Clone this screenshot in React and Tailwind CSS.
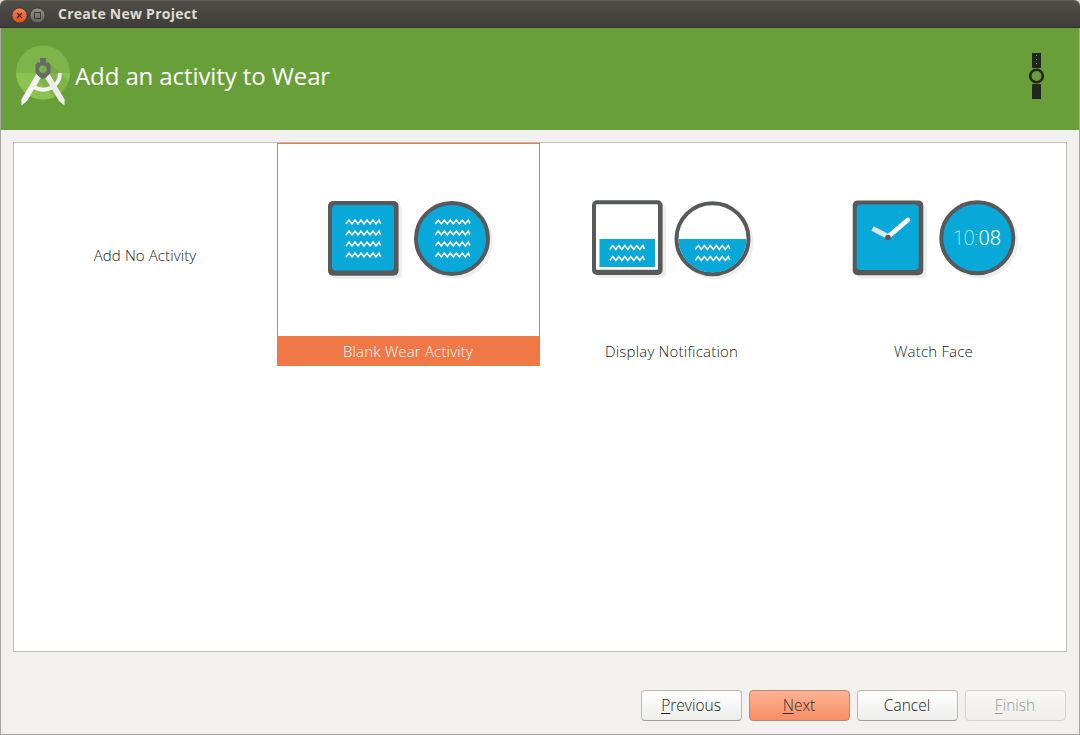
const TEXT = "font-['Open_Sans','Noto_Sans',sans-serif] whitespace-nowrap";
const LABEL = "font-light text-[15px] tracking-[0.1px]";

const waves = (x, y) => {
  let d = `M${x} ${y + 4}`;
  for (let i = 1; i <= 11; i++) d += `L${x + i * 3} ${y + (i % 2 ? 0 : 4)}`;
  return d + `l1.6 3.6`;
};

function Waves({ x, y, rows }) {
  return Array.from({ length: rows }, (_, i) => (
    <path key={i} d={waves(x, y + i * 11)} fill="none" stroke="#fff" strokeWidth="1.5" />
  ));
}

function SquareWatch({ x, y, fill, r = 4, children }) {
  return (
    <g>
      <rect x={x + 4} y={y + 4} width="70" height="74" rx="5" fill="#eeeeee" />
      <rect x={x} y={y} width="70.6" height="74.8" rx="5" fill="#58595b" />
      <rect x={x + 4} y={y + 4} width="62" height="65.500" rx={r} fill={fill} />
      {children}
    </g>
  );
}

function RoundWatch({ cx, cy, fill, children }) {
  return (
    <g>
      <ellipse cx={cx + 3} cy={cy + 3} rx="38" ry="37.5" fill="#eeeeee" />
      <ellipse cx={cx} cy={cy} rx="36" ry="35.5" fill={fill} stroke="#58595b" strokeWidth="4" />
      {children}
    </g>
  );
}

/* Art is drawn on a 263x193 canvas, the area above each tile label. */
function BlankArt() {
  return (
    <svg width="261" height="192" viewBox="1 1 261 192">
      <SquareWatch x={51} y={58} fill="#08a9d9"><Waves x={69} y={77} rows={4} /></SquareWatch>
      <RoundWatch cx={175} cy={95.5} fill="#08a9d9"><Waves x={158.3} y={77} rows={4} /></RoundWatch>
    </svg>
  );
}

function NotificationArt() {
  return (
    <svg width="263" height="193" viewBox="0 0 263 193">
      <SquareWatch x={52} y={57.2} fill="#fff" r={1}>
        <rect x="59.500" y="96" width="55.500" height="28" fill="#08a9d9" />
        <Waves x={69.8} y={102.500} rows={2} />
      </SquareWatch>
      <RoundWatch cx={172.5} cy={95.8} fill="#fff">
        <path d="M138.500 96H206.500A34 33.500 0 0 1 138.500 96Z" fill="#08a9d9" />
        <Waves x={155.3} y={102.500} rows={2} />
      </RoundWatch>
    </svg>
  );
}

function WatchFaceArt() {
  return (
    <svg width="263" height="193" viewBox="0 0 263 193">
      <SquareWatch x={49.7} y={57.4} fill="#08a9d9">
        <path d="M69.500 85.500L84 93" stroke="#e3e4e5" strokeWidth="4.800" />
        <path d="M86 93L104.800 77" stroke="#fff" strokeWidth="4.800" strokeLinecap="round" />
        <circle cx="85" cy="94.500" r="2.800" fill="#58595b" />
      </SquareWatch>
      <RoundWatch cx={174.3} cy={94.8} fill="#08a9d9">
        <text x="150" y="102" fontSize="21" fill="#fff" className="font-[Roboto,sans-serif] font-thin" textLength="25" lengthAdjust="spacingAndGlyphs">10:</text>
        <text x="175.500" y="102" fontSize="21" fill="#fff" className="font-[Roboto,sans-serif] font-light" textLength="22.500" lengthAdjust="spacingAndGlyphs">08</text>
      </RoundWatch>
    </svg>
  );
}

function StudioLogo() {
  return (
    <svg width="56" height="62" viewBox="15 45 56 62" className="shrink-0">
      <defs><clipPath id="disc"><circle cx="43" cy="72.500" r="27" /></clipPath></defs>
      <circle cx="43" cy="72.500" r="27" fill="#7db54b" />
      <g clipPath="url(#disc)">
        <path d="M15 73h56v30H15z" fill="#8bc34f" />
        <path d="M46 60l27 25v18H60L38 80z" fill="#5e9638" opacity=".3" />
      </g>
      <path d="M33 86.500C44 93.500 59.500 88.500 60 73" fill="none" stroke="#f2f2f2" strokeWidth="4" />
      <path d="M36.500 74L41 77.500 27 101 21.500 105.500 21.300 99.500z" fill="#f6f6f6" />
      <path d="M49.500 74L45 77.500 59 101 64.500 105.500 64.700 99.500z" fill="#ebebeb" />
      <path fillRule="evenodd" d="M40 58h6v4.500h2.500l2 2.500v8L46 77.500l-3 1.500-3-1.500L35.500 73v-8l2-2.500H40zM43 65.500a3.800 3.800 0 1 0 0 7.600a3.800 3.800 0 1 0 0-7.600z" fill="#666a68" />
    </svg>
  );
}

function WearIcon() {
  return (
    <svg width="16" height="48" viewBox="1029 52 16 48">
      <path d="M1032 53h9v14.500l-1 .5h-7l-1-.5zM1032 84.500l1-.5h7l1 .5V99h-9z" fill="#222522" />
      <circle cx="1036.500" cy="76" r="6.300" fill="#689f38" stroke="#222522" strokeWidth="2.600" />
      <path d="M1036 55h1v1h-1zM1036 59h1v1h-1zM1036 63h1v1h-1z" fill="#689f38" />
    </svg>
  );
}

function WindowButtons() {
  return (
    <svg width="36" height="18" viewBox="11 5 36 18">
      <defs>
        <linearGradient id="close" x2="0" y2="1"><stop stopColor="#f6835c" /><stop offset="1" stopColor="#e04f20" /></linearGradient>
        <linearGradient id="max" x2="0" y2="1"><stop stopColor="#92918a" /><stop offset="1" stopColor="#63625d" /></linearGradient>
      </defs>
      <circle cx="19.500" cy="14.500" r="7.600" fill="url(#close)" stroke="#34322d" strokeWidth=".8" />
      <path d="M17 12l5 5m0-5l-5 5" stroke="#4a2014" strokeWidth="1.200" />
      <circle cx="37.500" cy="14.500" r="7.600" fill="url(#max)" stroke="#34322d" strokeWidth=".8" />
      <path d="M34.500 11.500h6v6h-6z" fill="none" stroke="#3c3b37" />
    </svg>
  );
}

function Tile({ label, art, spacing }) {
  return (
    <div className="flex h-[223px] w-[263px] flex-col">
      <div className="h-[193px]">{art}</div>
      <div className={`${TEXT} flex h-[30px] items-center justify-center text-[15px] font-light text-[#202020] ${spacing}`}>{label}</div>
    </div>
  );
}

function Button({ tone, children }) {
  return (
    <button className={`${TEXT} h-[31px] w-[101px] rounded-[4px] border pr-px text-[15.5px] font-light underline-offset-2 ${tone}`}>{children}</button>
  );
}

export default function App() {
  const plain = "border-[#bcb9b5] border-b-[#a19d98] bg-linear-to-b from-white to-[#ededec] text-[#202020]";
  return (
    <div className="h-[735px] w-[1080px] overflow-hidden bg-[#d8d5d2]">
      <div className="flex h-full flex-col overflow-hidden rounded-t-[6px] bg-[#f2f1f0]">
        <header className="flex h-7 shrink-0 items-center border-t border-[#5d5b55] bg-linear-to-b from-[#504f49] to-[#3d3c38] pl-[11px] shadow-[inset_0_-1px_0_#343330]">
          <WindowButtons />
          <h1 className="ml-[11px] pb-0.5 whitespace-nowrap font-['Open_Sans',sans-serif] text-[14px] font-bold tracking-[0.26px] text-[#dfdbd2]">Create New Project</h1>
        </header>
        <div className="flex flex-1 flex-col border-x border-b border-[#a8a6a3]">
          <div className="flex h-[102px] items-center justify-between bg-[#689f38] pl-[14px] pr-[34px]">
            <div className="flex items-center">
              <div className="-mt-1.5"><StudioLogo /></div>
              <h2 className={`${TEXT} ml-1 -mt-1.5 text-[24px] font-normal tracking-[-0.1px] text-white`}>Add an activity to Wear</h2>
            </div>
            <div className="-mt-1.5"><WearIcon /></div>
          </div>
          <main className="mx-3 mt-3 flex h-[510px] items-start border border-[#bfbdba] bg-white">
            <div className={`${TEXT} ${LABEL} flex h-[224px] w-[263px] items-center justify-center pr-px text-[#202020]`}>Add No Activity</div>
            <div className="flex h-[223px] w-[263px] flex-col border border-[#f07746] bg-[#f07746]">
              <div className="h-[192px] bg-white"><BlankArt /></div>
              <div className={`${TEXT} flex h-[29px] items-center justify-center pt-px pr-px text-[15px] font-light tracking-[0.18px] text-white`}>Blank Wear Activity</div>
            </div>
            <Tile label="Display Notification" art={<NotificationArt />} spacing="tracking-[0.2px]" />
            <Tile label="Watch Face" art={<WatchFaceArt />} spacing="pr-0.5 tracking-[0.2px]" />
          </main>
          <footer className="mt-[38px] flex justify-end gap-[7px] pr-[13px]">
            <Button tone={plain}><u>P</u>revious</Button>
            <Button tone="border-[#b98975] bg-linear-to-b from-[#ffb193] to-[#f58e65] text-[#303030]"><u>N</u>ext</Button>
            <Button tone={plain}>Cancel</Button>
            <Button tone="border-[#d5d3d1] bg-linear-to-b from-[#f7f7f6] to-[#efeeed] text-[#989896]"><u>F</u>inish</Button>
          </footer>
        </div>
      </div>
    </div>
  );
}
